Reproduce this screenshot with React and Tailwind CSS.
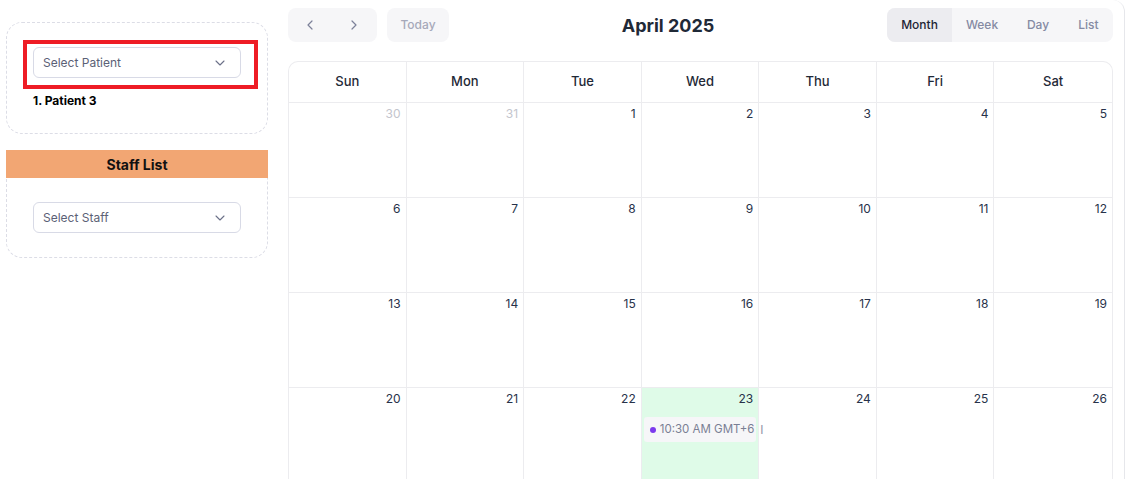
import { ChevronDown, ChevronLeft, ChevronRight } from 'lucide-react';

const DAYS = ['Sun', 'Mon', 'Tue', 'Wed', 'Thu', 'Fri', 'Sat'];

const WEEKS = [
  [30, 31, 1, 2, 3, 4, 5],
  [6, 7, 8, 9, 10, 11, 12],
  [13, 14, 15, 16, 17, 18, 19],
  [20, 21, 22, 23, 24, 25, 26],
];

function SelectBox({ label }) {
  return (
    <div className="h-[31px] w-full rounded-md border border-[#d8dae6] bg-white flex items-center justify-between pl-[9px] pr-[12px]">
      <span className="text-[12px] text-[#5b6176]">{label}</span>
      <ChevronDown size={16} strokeWidth={1.6} className="text-[#6b7088]" />
    </div>
  );
}

function DayCell({ day, muted, today, last, event }) {
  return (
    <div
      className={`relative h-[95px] border-t border-[#ececef] ${last ? '' : 'border-r'} ${today ? 'bg-[#dffbe8]' : 'bg-white'}`}
    >
      <div className={`text-right pr-[5px] pt-[2px] text-[12px] leading-[18px] ${muted ? 'text-[#c3c5cd]' : 'text-[#27324a]'}`}>
        {day}
      </div>
      {event && (
        <div className="relative z-10 mx-[2px] mt-[9px] h-[25px] rounded-[3px] bg-[#f6f6f8] flex items-center pl-[6px]">
          <span className="shrink-0 w-[6px] h-[6px] rounded-full bg-[#7c3aed] mr-[4px]" />
          <span className="text-[11.5px] text-[#7a7f94] whitespace-nowrap">{event}</span>
          <span className="absolute left-[calc(100%+4px)] top-[4px] text-[12px] text-[#9094a6]">I</span>
        </div>
      )}
    </div>
  );
}

export default function App() {
  return (
    <div className="h-[479px] w-[1127px] overflow-hidden bg-white flex" style={{ fontFamily: 'Inter, "Noto Sans", sans-serif' }}>
      {/* Sidebar */}
      <div className="w-[262px] ml-[6px] pt-[22px] flex flex-col gap-[16px] shrink-0">
        <div className="h-[112px] rounded-2xl border border-dashed border-[#dcdde6] pl-[16px] pr-[9px] pt-[17px]">
          <div className="border-4 border-[#ee1c25] pl-[6px] pr-[13px] pt-[3px] pb-[7px]">
            <SelectBox label="Select Patient" />
          </div>
          <div className="mt-[3px] pl-[10px] text-[12px] font-bold text-black">1. Patient 3</div>
        </div>

        <div className="h-[108px] rounded-2xl border border-dashed border-[#dcdde6]">
          <div className="-mx-px -mt-px h-[28px] bg-[#f2a673] flex items-center justify-center text-[14px] font-bold text-[#111]">
            Staff List
          </div>
          <div className="pl-[26px] pr-[26px] pt-[24px]">
            <SelectBox label="Select Staff" />
          </div>
        </div>
      </div>

      {/* Calendar */}
      <div className="ml-[20px] w-[837px] pr-[11px] border-r border-[#e6e7eb] rounded-tr-xl flex flex-col">
        <div className="pt-[8px] flex items-center justify-between h-[42px]">
          <div className="flex items-center gap-[10px]">
            <div className="h-[34px] w-[89px] rounded-lg bg-[#f6f6f8] flex items-center justify-between pl-[14px] pr-[15px] text-[#7c8199]">
              <ChevronLeft size={16} strokeWidth={1.8} />
              <ChevronRight size={16} strokeWidth={1.8} />
            </div>
            <div className="h-[34px] w-[62px] rounded-lg bg-[#f6f6f8] flex items-center justify-center text-[12px] font-medium text-[#a6a9ba]">
              Today
            </div>
          </div>
          <div className="text-[18px] font-bold text-[#1f2937]">April 2025</div>
          <div className="h-[34px] w-[226px] rounded-lg bg-[#f6f6f8] flex items-center overflow-hidden text-[12px] font-medium">
            <div className="h-full w-[65px] bg-[#ececf0] flex items-center justify-center text-[#1e2535]">Month</div>
            <div className="h-full w-[60px] flex items-center justify-center text-[#858aa3]">Week</div>
            <div className="h-full w-[52px] flex items-center justify-center text-[#858aa3]">Day</div>
            <div className="h-full flex-1 flex items-center justify-center text-[#858aa3]">List</div>
          </div>
        </div>

        <div className="mt-[19px] rounded-t-[10px] border-t border-l border-r border-[#ececef] overflow-hidden">
          <div className="grid grid-cols-7">
            {DAYS.map((d, i) => (
              <div
                key={d}
                className={`h-[40px] flex items-center justify-center text-[13px] font-medium text-[#1f2937] ${i < 6 ? 'border-r border-[#ececef]' : ''}`}
              >
                {d}
              </div>
            ))}
          </div>
          {WEEKS.map((week, wi) => (
            <div key={wi} className="grid grid-cols-7">
              {week.map((day, di) => (
                <DayCell
                  key={di}
                  day={day}
                  muted={wi === 0 && day > 20}
                  today={wi === 3 && day === 23}
                  last={di === 6}
                  event={wi === 3 && day === 23 ? '10:30 AM GMT+6' : null}
                />
              ))}
            </div>
          ))}
        </div>
      </div>
    </div>
  );
}
